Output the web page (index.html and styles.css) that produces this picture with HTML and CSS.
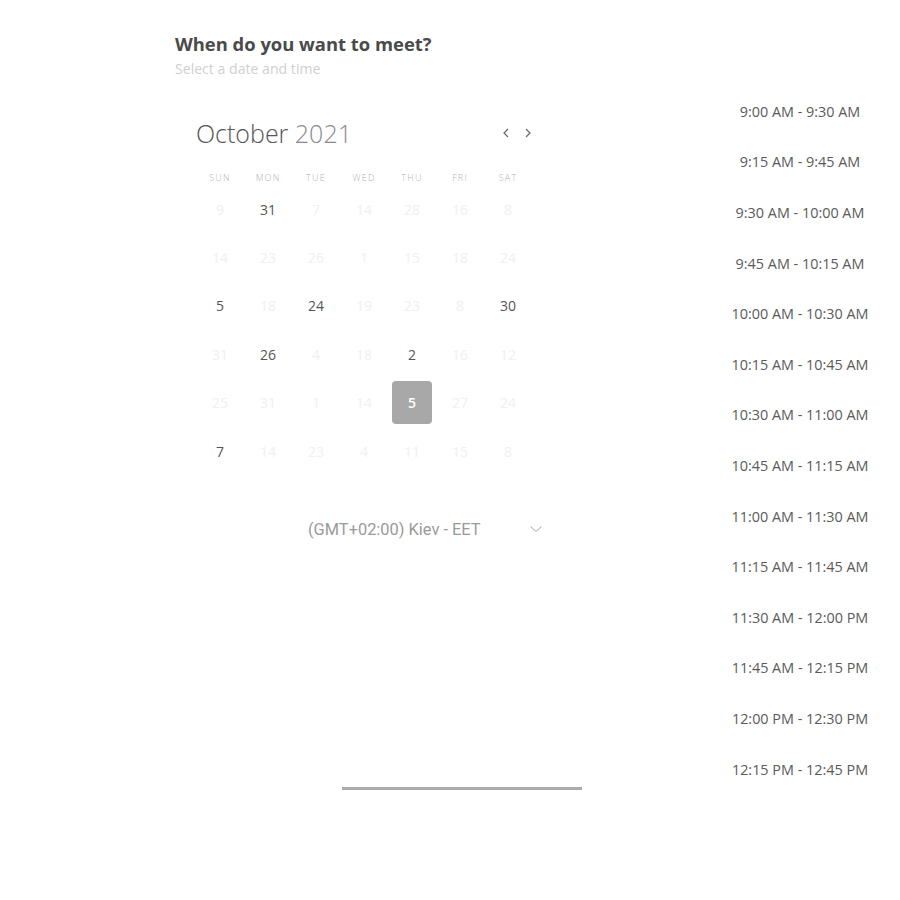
FILE: index.html
```html
<!DOCTYPE html>
<html lang="en">
<head>
<meta charset="utf-8">
<title>Schedule</title>
<link rel="stylesheet" href="styles.css">
</head>
<body>
<div class="page">
  <div class="left">
    <h1 class="title">When do you want to meet?</h1>
    <p class="subtitle">Select a date and time</p>
    <div class="calendar">
      <div class="cal-head">
        <div class="month">October <span class="year">2021</span></div>
        <div class="nav">
          <svg class="nav-icon" width="8" height="12" viewBox="0 0 8 12"><polyline points="6,2 2,6 6,10" fill="none" stroke="#666" stroke-width="1.2"/></svg>
          <svg class="nav-icon" width="8" height="12" viewBox="0 0 8 12"><polyline points="2,2 6,6 2,10" fill="none" stroke="#666" stroke-width="1.2"/></svg>
        </div>
      </div>
      <div class="grid">
        <div class="dow">SUN</div><div class="dow">MON</div><div class="dow">TUE</div><div class="dow">WED</div><div class="dow">THU</div><div class="dow">FRI</div><div class="dow">SAT</div>

        <div class="day off">9</div><div class="day">31</div><div class="day off">7</div><div class="day off">14</div><div class="day off">28</div><div class="day off">16</div><div class="day off">8</div>

        <div class="day off">14</div><div class="day off">23</div><div class="day off">26</div><div class="day off">1</div><div class="day off">15</div><div class="day off">18</div><div class="day off">24</div>

        <div class="day">5</div><div class="day off">18</div><div class="day">24</div><div class="day off">19</div><div class="day off">23</div><div class="day off">8</div><div class="day">30</div>

        <div class="day off">31</div><div class="day">26</div><div class="day off">4</div><div class="day off">18</div><div class="day">2</div><div class="day off">16</div><div class="day off">12</div>

        <div class="day off">25</div><div class="day off">31</div><div class="day off">1</div><div class="day off">14</div><div class="day"><span class="selected">5</span></div><div class="day off">27</div><div class="day off">24</div>

        <div class="day">7</div><div class="day off">14</div><div class="day off">23</div><div class="day off">4</div><div class="day off">11</div><div class="day off">15</div><div class="day off">8</div>
      </div>
    </div>
    <div class="tz">
      <span class="tz-text">(GMT+02:00) Kiev - EET</span>
      <svg class="tz-icon" width="14" height="8" viewBox="0 0 14 8"><polyline points="1.5,1.5 7,6.5 12.5,1.5" fill="none" stroke="#aaa" stroke-width="1"/></svg>
    </div>
    <div class="bar"></div>
  </div>
  <div class="slots">
    <div class="slot">9:00 AM - 9:30 AM</div>
    <div class="slot">9:15 AM - 9:45 AM</div>
    <div class="slot">9:30 AM - 10:00 AM</div>
    <div class="slot">9:45 AM - 10:15 AM</div>
    <div class="slot">10:00 AM - 10:30 AM</div>
    <div class="slot">10:15 AM - 10:45 AM</div>
    <div class="slot">10:30 AM - 11:00 AM</div>
    <div class="slot">10:45 AM - 11:15 AM</div>
    <div class="slot">11:00 AM - 11:30 AM</div>
    <div class="slot">11:15 AM - 11:45 AM</div>
    <div class="slot">11:30 AM - 12:00 PM</div>
    <div class="slot">11:45 AM - 12:15 PM</div>
    <div class="slot">12:00 PM - 12:30 PM</div>
    <div class="slot">12:15 PM - 12:45 PM</div>
  </div>
</div>
</body>
</html>
```
FILE: styles.css
```css
html, body {
  margin: 0;
  padding: 0;
  background: #fff;
}
body {
  font-family: "Open Sans", "Liberation Sans", sans-serif;
  color: #555;
}
.page {
  display: flex;
  width: 900px;
  height: 900px;
  box-sizing: border-box;
  padding: 32px 20px 0 175px;
}
.left {
  width: 410px;
  display: flex;
  flex-direction: column;
}
.title {
  margin: 0;
  font-size: 18.4px;
  line-height: 23px;
  font-weight: 700;
  color: #4a4a4a;
}
.subtitle {
  margin: 4px 0 0;
  font-size: 14.1px;
  line-height: 19px;
  color: #d0d0d0;
}
.calendar {
  margin: 39px 0 0 21px;
  width: 336px;
}
.cal-head {
  display: flex;
  align-items: center;
  justify-content: space-between;
  height: 32px;
}
.month {
  font-size: 25px;
  font-weight: 300;
  line-height: 32px;
  color: #555;
}
.year {
  color: #8a8a8a;
}
.nav {
  display: flex;
  gap: 14px;
}
.nav-icon {
  display: block;
}
.grid {
  margin-top: 20px;
  display: grid;
  grid-template-columns: repeat(7, 48px);
  grid-template-rows: 16px repeat(6, 48.4px);
}
.dow {
  font-size: 9px;
  font-weight: 300;
  letter-spacing: 1.2px;
  color: #b0b0b0;
  display: flex;
  align-items: center;
  justify-content: center;
}
.day {
  font-size: 14px;
  color: #555;
  display: flex;
  align-items: center;
  justify-content: center;
}
.day.off {
  color: #f0f0f0;
}
.selected {
  width: 40px;
  height: 43px;
  border-radius: 4px;
  background: #a8a8a8;
  color: #fff;
  font-weight: 600;
  display: flex;
  align-items: center;
  justify-content: center;
}
.tz {
  margin: 44px 0 0 133px;
  width: 240px;
  height: 20px;
  display: flex;
  align-items: center;
  justify-content: space-between;
}
.tz-text {
  font-family: Roboto, "Liberation Sans", sans-serif;
  font-size: 16.4px;
  color: #9a9a9a;
}
.tz-icon {
  display: block;
  margin-right: 5px;
}
.bar {
  margin: 248px 0 0 167px;
  width: 240px;
  height: 3px;
  background: #aaa;
}
.slots {
  margin-left: auto;
  width: 160px;
  margin-top: 54px;
  display: flex;
  flex-direction: column;
}
.slot {
  height: 50.6px;
  display: flex;
  align-items: center;
  justify-content: center;
  font-size: 14.4px;
  color: #5a5a5a;
  white-space: nowrap;
}
```
